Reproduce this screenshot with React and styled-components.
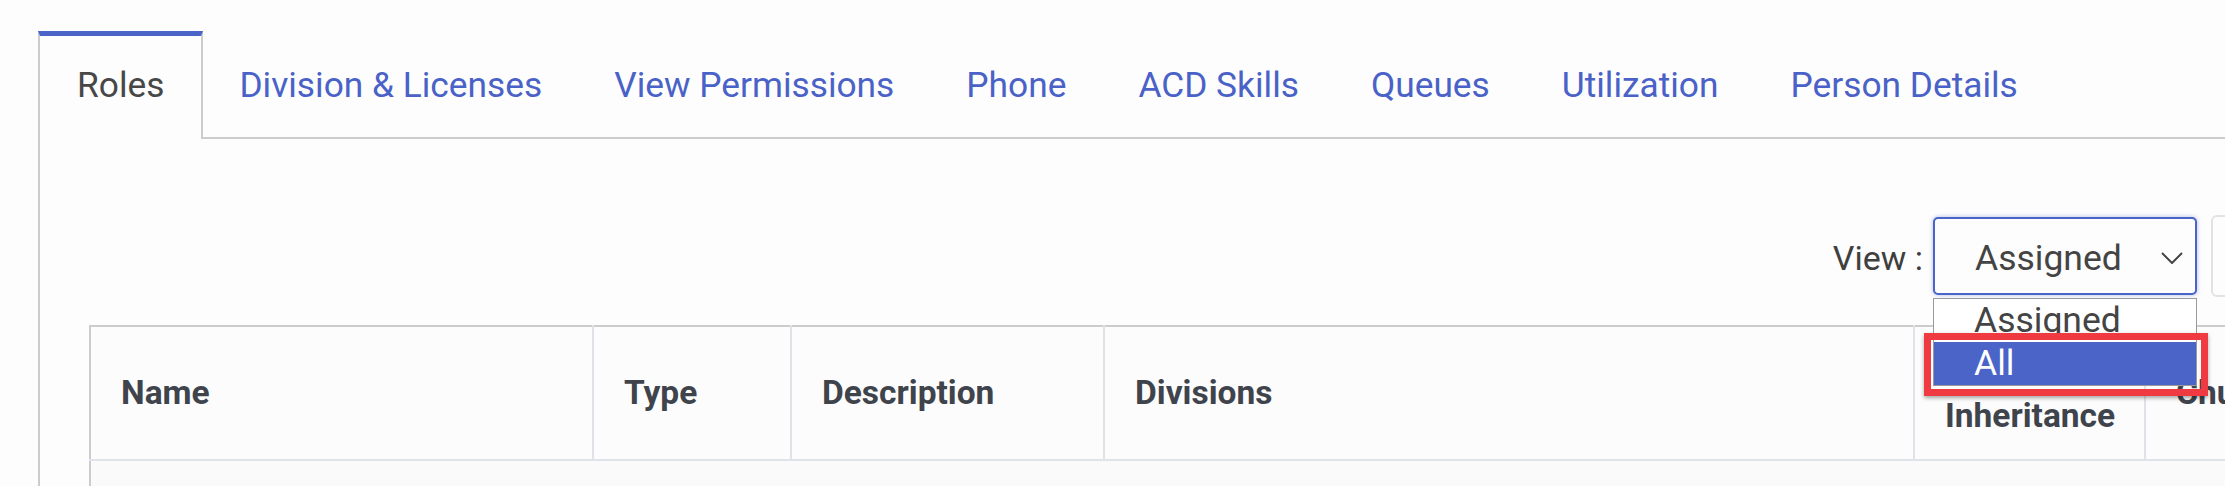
import React from 'react';
import styled, { createGlobalStyle } from 'styled-components';

const GlobalStyle = createGlobalStyle`
    html, body {
        margin: 0;
        background: #fdfdfd;
        overflow: hidden;
    }
    body {
        font-family: Roboto, "Liberation Sans", Arial, sans-serif;
        color: #444;
    }
`

const Page = styled.div`
    width: 2362px;
    padding: 31px 0 0 38px;
`

const TabBar = styled.div`
    display: flex;
    height: 108px;
    box-sizing: border-box;
    border-bottom: 2px solid #cccccc;
`

const Tab = styled.div`
    display: flex;
    align-items: center;
    box-sizing: border-box;
    height: 108px;
    padding: 0 ${p => p.$active ? 37 : 34}px 5px;
    font-size: 35.3px;
    color: ${p => p.$active ? '#474747' : '#4a62c7'};
    background: ${p => p.$active ? '#fdfdfd' : 'transparent'};
    border-top: 5px solid ${p => p.$active ? '#4b64c8' : 'transparent'};
    border-left: 2px solid ${p => p.$active ? '#cccccc' : 'transparent'};
    border-right: 2px solid ${p => p.$active ? '#cccccc' : 'transparent'};
    cursor: pointer;
    white-space: nowrap;
`

const Panel = styled.div`
    border-left: 2px solid #cccccc;
    padding: 78px 49px 40px 49px;
`

const Toolbar = styled.div`
    display: flex;
    justify-content: flex-end;
    align-items: center;
    height: 78px;
`

const ViewLabel = styled.span`
    font-size: 34px;
    color: #3f3f3f;
    margin: 4px 10px 0 0;
`

const SelectWrap = styled.div`
    position: relative;
    margin-right: 14px;
`

const SelectBox = styled.div`
    display: flex;
    align-items: center;
    justify-content: space-between;
    box-sizing: border-box;
    width: 264px;
    height: 78px;
    padding: 3px 12px 0 40px;
    font-size: 35.5px;
    color: #444;
    background: #fdfdfd;
    border: 2px solid #4b64c8;
    border-radius: 5px;
    box-shadow: 0 0 4px rgba(75, 100, 200, 0.45);
`

const OptionList = styled.div`
    position: absolute;
    top: calc(100% + 3px);
    left: 0;
    width: 264px;
    box-sizing: border-box;
    background: #fff;
    border: 1px solid #9a9a9a;
    z-index: 10;
`

const Option = styled.div`
    height: 43px;
    line-height: 43px;
    padding-left: 40px;
    font-size: 35.5px;
    color: ${p => p.$selected ? '#fff' : '#444'};
    background: ${p => p.$selected ? '#4a64c8' : '#fff'};
    overflow: hidden;
`

const Highlight = styled.div`
    position: absolute;
    left: -10px;
    top: 34px;
    width: 284px;
    height: 63px;
    box-sizing: border-box;
    border: 7px solid #f03a42;
    box-shadow: 0 2px 4px rgba(0, 0, 0, 0.35);
    pointer-events: none;
`

const ExportButton = styled.button`
    box-sizing: border-box;
    width: 140px;
    height: 82px;
    font-family: inherit;
    font-size: 35px;
    color: #444;
    background: #fdfdfd;
    border: 2px solid #e2e2e2;
    border-radius: 6px;
`

const Table = styled.table`
    margin-top: 30px;
    width: 2400px;
    table-layout: fixed;
    border-collapse: collapse;
    border-top: 2px solid #cccccc;
    border-left: 2px solid #cccccc;
`

const HeadCell = styled.th`
    width: ${p => p.$width}px;
    height: 134px;
    padding: 0 30px;
    box-sizing: border-box;
    text-align: left;
    font-size: 33.5px;
    font-weight: 700;
    line-height: 46px;
    color: #3f444c;
    background: #fcfcfc;
    border-right: 2px solid #dfe2e7;
    border-bottom: 2px solid #dfe3ea;
    overflow: hidden;
`

const BodyCell = styled.td`
    height: 60px;
    background: #fafafa;
`

const Chevron = () => (
    <svg width="22" height="12" viewBox="0 0 22 12" fill="none">
        <polyline points="1,1 11,11 21,1" stroke="#444" strokeWidth="2" />
    </svg>
)

const tabs = ['Roles', 'Division & Licenses', 'View Permissions', 'Phone', 'ACD Skills', 'Queues', 'Utilization', 'Person Details'];

const columns = [
    { label: 'Name', width: 503 },
    { label: 'Type', width: 198 },
    { label: 'Description', width: 313 },
    { label: 'Divisions', width: 810 },
    { label: 'Division Inheritance', width: 231 },
    { label: 'Chunked', width: 345 },
];

export default function App() {
    return (
        <Page>
            <GlobalStyle />
            <TabBar>
                {tabs.map((t, i) => (
                    <Tab key={t} $active={i === 0}>{t}</Tab>
                ))}
            </TabBar>
            <Panel>
                <Toolbar>
                    <ViewLabel>View :</ViewLabel>
                    <SelectWrap>
                        <SelectBox>
                            <span>Assigned</span>
                            <Chevron />
                        </SelectBox>
                        <OptionList>
                            <Option>Assigned</Option>
                            <Option $selected>All</Option>
                            <Highlight />
                        </OptionList>
                    </SelectWrap>
                    <ExportButton>Export</ExportButton>
                </Toolbar>
                <Table>
                    <thead>
                        <tr>
                            {columns.map(c => (
                                <HeadCell key={c.label} $width={c.width}>{c.label}</HeadCell>
                            ))}
                        </tr>
                    </thead>
                    <tbody>
                        <tr>
                            {columns.map(c => <BodyCell key={c.label} />)}
                        </tr>
                    </tbody>
                </Table>
            </Panel>
        </Page>
    )
}
